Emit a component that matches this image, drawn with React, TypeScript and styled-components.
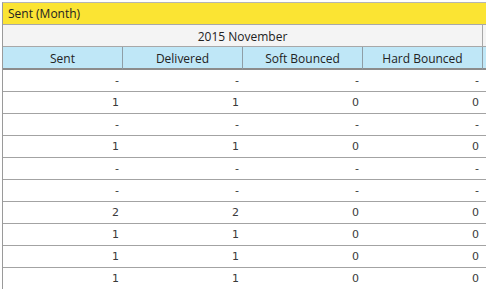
import React from "react";
import styled, { createGlobalStyle } from "styled-components";

const Global = createGlobalStyle`
  html, body { margin: 0; padding: 0; background: #fff; }
  body { font-family: "Open Sans", "Noto Sans", sans-serif; overflow: hidden; }
`;

const Frame = styled.div`
  margin: 2px 0 0 2px;
  border-left: 1px solid #9a9a9a;
  border-top: 1px solid #b5b5b5;
  width: 483px;
`;

const TitleBar = styled.div`
  height: 21px;
  background: #fbe433;
  border-bottom: 1px solid #a8a8a8;
  display: flex;
  align-items: center;
  padding-left: 5px;
  font-size: 12px;
  color: #222;
`;

const Grid = styled.div`
  display: grid;
  grid-template-columns: repeat(4, 120px) 3px;
`;

const PeriodCell = styled.div`
  grid-column: 1 / span 4;
  height: 21px;
  box-sizing: border-box;
  padding-top: 2px;
  background: #f4f4f4;
  border-right: 1px solid #a8a8a8;
  border-bottom: 1px solid #a8a8a8;
  display: flex;
  align-items: center;
  justify-content: center;
  font-size: 12px;
  color: #222;
  height: 22px;
`;

const Filler = styled.div<{ $bg: string; $tall?: boolean }>`
  background: ${(p) => p.$bg};
  border-bottom: ${(p) => (p.$tall ? "2px solid #8c8c8c" : "1px solid #a8a8a8")};
`;

const HeadCell = styled.div`
  height: 20px;
  padding-top: 1px;
  background: #bfe7f7;
  border-right: 1px solid #8f9ea6;
  border-bottom: 2px solid #8c8c8c;
  display: flex;
  align-items: center;
  justify-content: center;
  font-size: 12px;
  color: #222;
`;

const Row = styled.div`
  grid-column: 1 / -1;
  display: grid;
  grid-template-columns: repeat(4, 120px) 3px;
  height: 21px;
  border-bottom: 1px solid #a3a3a3;
`;

const DataCell = styled.div`
  display: flex;
  align-items: center;
  justify-content: flex-end;
  padding-right: 4px;
  font-family: "DejaVu Sans", "Noto Sans", sans-serif;
  font-size: 11px;
  color: #3a3a3a;
`;

const rows: string[][] = [
  ["-", "-", "-", "-"],
  ["1", "1", "0", "0"],
  ["-", "-", "-", "-"],
  ["1", "1", "0", "0"],
  ["-", "-", "-", "-"],
  ["-", "-", "-", "-"],
  ["2", "2", "0", "0"],
  ["1", "1", "0", "0"],
  ["1", "1", "0", "0"],
  ["1", "1", "0", "0"],
];

const headers = ["Sent", "Delivered", "Soft Bounced", "Hard Bounced"];

export default function App() {
  return (
    <>
      <Global />
      <Frame>
        <TitleBar>Sent (Month)</TitleBar>
        <Grid>
          <PeriodCell>2015 November</PeriodCell>
          <Filler $bg="#f4f4f4" />
          {headers.map((h) => (
            <HeadCell key={h}>{h}</HeadCell>
          ))}
          <Filler $bg="#bfe7f7" $tall />
          {rows.map((r, i) => (
            <Row key={i}>
              {r.map((v, j) => (
                <DataCell key={j}>{v}</DataCell>
              ))}
              <div />
            </Row>
          ))}
        </Grid>
      </Frame>
    </>
  );
}
